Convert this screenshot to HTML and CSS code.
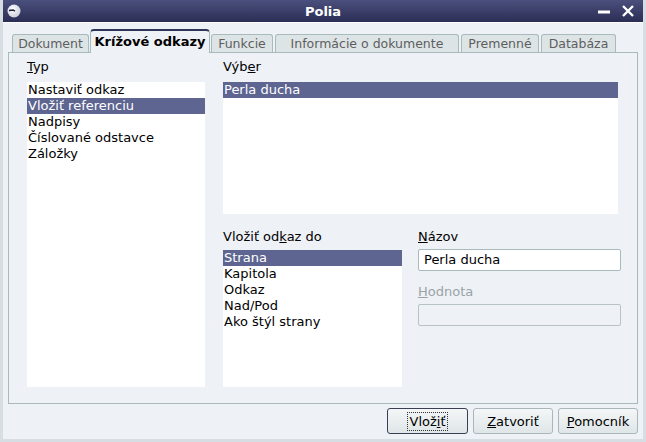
FILE: index.html
```html
<!DOCTYPE html>
<html lang="sk">

<head>
    <meta charset="UTF-8">
    <title>Polia</title>
    <link rel="stylesheet" href="styles.css">
</head>

<body>
    <div class="window">
        <div class="titlebar">
            <svg class="app-icon" width="14" height="14" viewBox="0 0 14 14">
                <defs>
                    <radialGradient id="ball" cx="0.4" cy="0.35" r="0.7">
                        <stop offset="0" stop-color="#ffffff" />
                        <stop offset="1" stop-color="#c9ccd8" />
                    </radialGradient>
                </defs>
                <circle cx="7" cy="7" r="6.5" fill="url(#ball)" />
                <path d="M2 6.5 L6 6 L8 7.2" stroke="#20223a" stroke-width="1.4" fill="none" />
            </svg>
            <span class="title">Polia</span>
            <div class="controls">
                <svg width="14" height="14" viewBox="0 0 14 14">
                    <path d="M1 8 H13" stroke="#ffffff" stroke-width="3" />
                </svg>
                <svg width="14" height="14" viewBox="0 0 14 14">
                    <path d="M2 2 L12 12 M12 2 L2 12" stroke="#ffffff" stroke-width="2.4" />
                </svg>
            </div>
        </div>

        <div class="content">
            <div class="tabs">
                <div class="tab tab-doc">Dokument</div>
                <div class="tab active">Krížové odkazy</div>
                <div class="tab tab-func">Funkcie</div>
                <div class="tab tab-info">Informácie o dokumente</div>
                <div class="tab tab-var">Premenné</div>
                <div class="tab tab-db">Databáza</div>
            </div>

            <div class="panel">
                <div class="col-left">
                    <div class="label"><u>T</u>yp</div>
                    <ul class="list list-fill">
                        <li>Nastaviť odkaz</li>
                        <li class="selected">Vložiť referenciu</li>
                        <li>Nadpisy</li>
                        <li>Číslované odstavce</li>
                        <li>Záložky</li>
                    </ul>
                </div>

                <div class="col-right">
                    <div class="label">Výb<u>e</u>r</div>
                    <ul class="list list-select">
                        <li class="selected">Perla ducha</li>
                    </ul>

                    <div class="bottom-row">
                        <div class="sub-col">
                            <div class="label">Vložiť od<u>k</u>az do</div>
                            <ul class="list list-format">
                                <li class="selected">Strana</li>
                                <li>Kapitola</li>
                                <li>Odkaz</li>
                                <li>Nad/Pod</li>
                                <li>Ako štýl strany</li>
                            </ul>
                        </div>
                        <div class="sub-col">
                            <div class="label"><u>N</u>ázov</div>
                            <div class="field">Perla ducha</div>
                            <div class="label disabled label-value"><u>H</u>odnota</div>
                            <div class="field field-disabled"></div>
                        </div>
                    </div>
                </div>
            </div>

            <div class="buttons">
                <button class="btn focused"><span class="focus-ring">Vlož<u>i</u>ť</span></button>
                <button class="btn btn-close"><u>Z</u>atvoriť</button>
                <button class="btn btn-help"><u>P</u>omocník</button>
            </div>
        </div>
    </div>
</body>

</html>
```

FILE: styles.css
```css
* {
    box-sizing: border-box;
}

body {
    margin: 0;
    padding: 0;
    font-family: "DejaVu Sans", sans-serif;
    font-size: 13px;
    color: #000;
    background-color: #eef1f6;
}

.window {
    width: 646px;
    height: 442px;
    display: flex;
    flex-direction: column;
    background-color: #eef1f6;
    border-left: 3px solid #d6dee3;
    border-right: 3px solid #d6dee3;
    border-bottom: 3px solid #d6dee3;
    overflow: hidden;
}

/* Title bar */
.titlebar {
    height: 23px;
    margin: 0 -3px;
    display: flex;
    align-items: center;
    position: relative;
    background: linear-gradient(#4a4f7d, #2b2e54);
    border-bottom: 1px solid #ffffff;
}

.app-icon {
    margin-left: 7px;
}

.title {
    position: absolute;
    left: 0;
    right: 0;
    text-align: center;
    color: #ffffff;
    font-weight: bold;
    font-size: 13px;
    pointer-events: none;
}

.controls {
    margin-left: auto;
    margin-right: 11px;
    display: flex;
    gap: 10px;
}

/* Body */
.content {
    flex: 1;
    display: flex;
    flex-direction: column;
    padding: 6px 5px 0 5px;
}

.tabs {
    height: 23px;
    display: flex;
    align-items: flex-end;
    padding-left: 4px;
    position: relative;
    z-index: 1;
}

.tab {
    height: 18px;
    padding-top: 1px;
    margin-right: 1px;
    line-height: 15px;
    font-size: 12.5px;
    text-align: center;
    color: #5e5e5e;
    background-color: #dde4e6;
    border: 1px solid #a9babd;
    border-bottom: none;
    border-radius: 3px 3px 0 0;
    white-space: nowrap;
}

.tab-doc {
    width: 77px;
}

.tab-func {
    width: 62px;
    margin-right: 2px;
}

.tab-info {
    width: 184px;
    margin-right: 2px;
}

.tab-var {
    width: 78px;
    margin-right: 2px;
}

.tab-db {
    width: 75px;
}

.tab.active {
    width: 120px;
    height: 24px;
    margin-bottom: -1px;
    padding-top: 3px;
    font-size: 13px;
    color: #000;
    font-weight: bold;
    background-color: #eef1f6;
    border-top: 2px solid #2f3459;
    border-radius: 4px 4px 0 0;
}

.panel {
    height: 352px;
    display: flex;
    padding: 6px 19px 16px 18px;
    border: 1px solid #a9babd;
    gap: 18px;
}

.col-left {
    flex: none;
    width: 178px;
    display: flex;
    flex-direction: column;
}

.col-right {
    flex: 1;
    min-width: 0;
    display: flex;
    flex-direction: column;
}

.label {
    height: 16px;
    line-height: 16px;
    margin-bottom: 7px;
    white-space: nowrap;
}

.label.disabled {
    color: #9aa3a6;
}

.list {
    list-style: none;
    margin: 0;
    padding: 0;
    background-color: #ffffff;
}

.list li {
    height: 16px;
    line-height: 16px;
    padding-left: 1px;
    white-space: nowrap;
}

.list li.selected {
    background-color: #5d6590;
    color: #ffffff;
}

.list-fill {
    flex: 1;
}

.list-select {
    height: 132px;
}

.bottom-row {
    flex: 1;
    display: flex;
    gap: 16px;
    margin-top: 15px;
    width: 398px;
}

.sub-col {
    flex: none;
    display: flex;
    flex-direction: column;
}

.sub-col:first-child {
    width: 179px;
}

.sub-col:last-child {
    width: 203px;
}

.sub-col .label {
    margin-bottom: 5px;
}

.list-format {
    flex: 1;
}

.field {
    height: 22px;
    margin-top: -1px;
    padding: 0 5px;
    line-height: 20px;
    background-color: #ffffff;
    border: 1px solid #a9babd;
    border-radius: 2px;
}

.field-disabled {
    background-color: #eef1f6;
    border-color: #b7c3c6;
}

.label-value {
    margin-top: 13px;
    margin-bottom: 9px;
}

/* Buttons */
.buttons {
    display: flex;
    justify-content: flex-end;
    gap: 5px;
    margin-top: 4px;
}

.btn {
    height: 26px;
    width: 80px;
    padding: 0;
    font-family: "DejaVu Sans", sans-serif;
    font-size: 13px;
    color: #000;
    background: linear-gradient(#f4f6f7, #dfe6e8);
    border: 1px solid #a9b7ba;
    border-radius: 3px;
}

.btn.focused {
    width: 81px;
    border-color: #3a3f55;
}

.btn-close {
    width: 80px;
}

.focus-ring {
    padding: 1px 1px;
    border: 1px dotted #333;
}
```
